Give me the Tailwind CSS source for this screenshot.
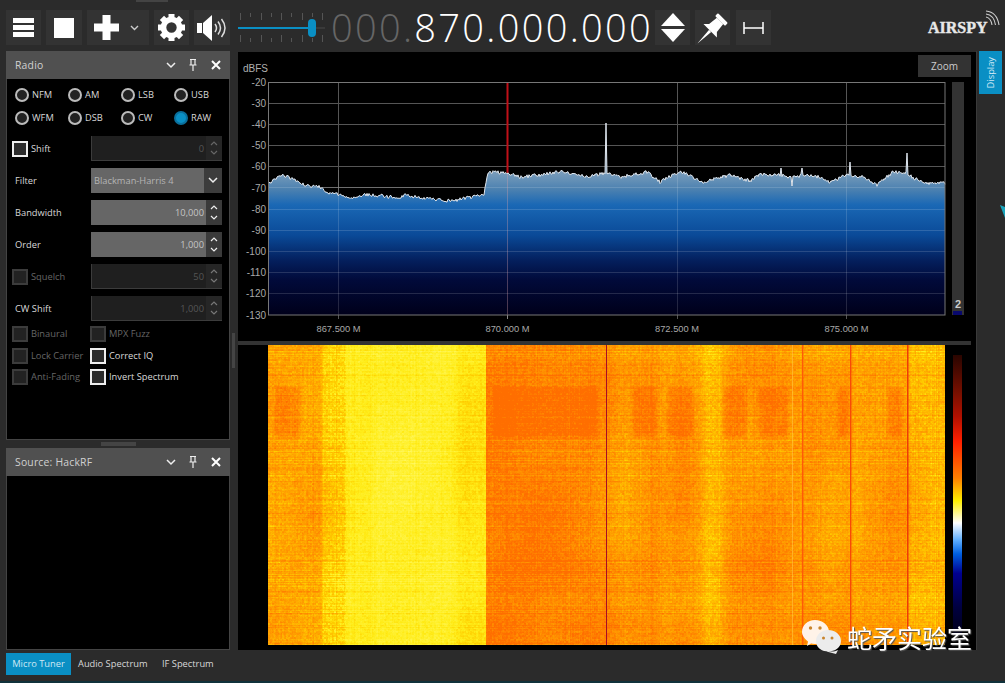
<!DOCTYPE html>
<html lang="en">
<head>
    <meta charset="UTF-8">
    <title>SDR#</title>
    <script src="https://cdn.jsdelivr.net/npm/@tailwindcss/browser@4"></script>
</head>
<body class="bg-[#2b2b2b]">
<div class="relative w-[1005px] h-[683px] overflow-hidden flex flex-col bg-[#2b2b2b] text-[9.3px] text-[#d8d8d8] font-['Open_Sans',sans-serif]">
    <div class="absolute top-0 left-[136px] w-[32px] h-[2px] bg-[#444]"></div>

    <!-- Toolbar -->
    <header class="h-[51px] shrink-0 flex items-start pt-[10px] pl-[6px]">
        <button class="w-[35px] h-[35px] bg-[#333] flex flex-col justify-center items-center gap-[2px]">
            <span class="block w-[21px] h-[5px] bg-white"></span>
            <span class="block w-[21px] h-[5px] bg-white"></span>
            <span class="block w-[21px] h-[5px] bg-white"></span>
        </button>
        <button class="ml-[5px] w-[36px] h-[35px] bg-[#333] flex items-center justify-center">
            <span class="block w-[20px] h-[20px] bg-white"></span>
        </button>
        <button class="ml-[5px] w-[62px] h-[35px] bg-[#333] flex items-center pl-[7px]">
            <svg width="25" height="25" viewBox="0 0 25 25"><path d="M8.5 0h8v8.5H25v8h-8.5V25h-8v-8.5H0v-8h8.5z" fill="#fff"/></svg>
            <svg class="ml-[11px]" width="9" height="6" viewBox="0 0 9 6"><path d="M1 1l3.5 3.5L8 1" fill="none" stroke="#ccc" stroke-width="1.4"/></svg>
        </button>
        <button class="ml-[5px] w-[35px] h-[35px] bg-[#333] flex items-center justify-center">
            <svg width="27" height="27" viewBox="-13.5 -13.5 27 27">
                <circle r="8" fill="none" stroke="#fff" stroke-width="5.6"/>
                <g fill="#fff">
                    <rect x="-3" y="-13.5" width="6" height="6"/>
                    <rect x="-3" y="-13.5" width="6" height="6" transform="rotate(45)"/>
                    <rect x="-3" y="-13.5" width="6" height="6" transform="rotate(90)"/>
                    <rect x="-3" y="-13.5" width="6" height="6" transform="rotate(135)"/>
                    <rect x="-3" y="-13.5" width="6" height="6" transform="rotate(180)"/>
                    <rect x="-3" y="-13.5" width="6" height="6" transform="rotate(225)"/>
                    <rect x="-3" y="-13.5" width="6" height="6" transform="rotate(270)"/>
                    <rect x="-3" y="-13.5" width="6" height="6" transform="rotate(315)"/>
                </g>
            </svg>
        </button>
        <button class="ml-[5px] w-[36px] h-[35px] bg-[#333] flex items-center justify-center">
            <svg width="30" height="28" viewBox="0 0 30 28">
                <path d="M0 9h5v10H0zM6 9L15 1v26l-9-8z" fill="#fff"/>
                <path d="M18 10q3 4 0 8M21 7.5q5 6.500 0 13M24.500 5q7 9 0 18" fill="none" stroke="#ddd" stroke-width="1.5"/>
            </svg>
        </button>
        <!-- Gain slider -->
        <div class="ml-[8px] w-[87px] h-[35px] flex flex-col justify-between py-[3px]">
            <div class="flex justify-between px-[2px] h-[7px] items-start">
                <i class="w-px h-[7px] bg-[#555]"></i><i class="w-px h-[4px] bg-[#555]"></i><i class="w-px h-[7px] bg-[#555]"></i><i class="w-px h-[4px] bg-[#555]"></i><i class="w-px h-[7px] bg-[#555]"></i><i class="w-px h-[4px] bg-[#555]"></i><i class="w-px h-[7px] bg-[#555]"></i><i class="w-px h-[4px] bg-[#555]"></i><i class="w-px h-[7px] bg-[#555]"></i>
            </div>
            <div class="relative h-[2px] bg-[#3a3a3a]">
                <div class="h-full w-[74px] bg-[#0a8fc4]"></div>
                <div class="absolute left-[70px] top-[-8px] w-[8px] h-[18px] rounded-[4px] bg-[#0a8fc4]"></div>
            </div>
            <div class="flex justify-between px-[2px] h-[7px] items-end">
                <i class="w-px h-[7px] bg-[#555]"></i><i class="w-px h-[4px] bg-[#555]"></i><i class="w-px h-[7px] bg-[#555]"></i><i class="w-px h-[4px] bg-[#555]"></i><i class="w-px h-[7px] bg-[#555]"></i><i class="w-px h-[4px] bg-[#555]"></i><i class="w-px h-[7px] bg-[#555]"></i><i class="w-px h-[4px] bg-[#555]"></i><i class="w-px h-[7px] bg-[#555]"></i>
            </div>
        </div>
        <!-- Frequency -->
        <div class="ml-[6px] w-[324px] h-[35px] leading-[35px] text-[38px] font-light tracking-[2.3px] whitespace-nowrap text-white"><span class="text-[#666]">000.</span>870.000.000</div>
        <button class="w-[35px] h-[35px] bg-[#333] flex flex-col items-center justify-center gap-[3px]">
            <svg width="24" height="13" viewBox="0 0 24 13"><path d="M12 0l12 13H0z" fill="#fff"/></svg>
            <svg width="24" height="13" viewBox="0 0 24 13"><path d="M12 13L24 0H0z" fill="#fff"/></svg>
        </button>
        <button class="ml-[5px] w-[35px] h-[35px] bg-[#333] flex items-center justify-center">
            <svg width="35" height="35" viewBox="-17.500 -17.500 35 35">
                <g transform="translate(.5,.5) rotate(45)" fill="#fff">
                    <rect x="-7" y="-14" width="14" height="4" rx="1"/>
                    <path d="M-4.500-10h9L5.500 0 9.500 4h-19L-5.500 0z"/>
                    <path d="M-1.500 4h3L0 22z"/>
                </g>
            </svg>
        </button>
        <button class="ml-[6px] w-[35px] h-[35px] bg-[#333] flex items-center justify-center">
            <svg width="21" height="14" viewBox="0 0 21 14"><path d="M1 1v12M20 1v12M1 7h19" fill="none" stroke="#fff" stroke-width="1.500"/></svg>
        </button>
        <div class="relative ml-[157px] w-[72px] h-[30px]">
            <span class="absolute left-0 top-[9px] leading-[18px] text-[16px] font-bold text-[#e8e8e8] [-webkit-text-stroke:0.4px_#e8e8e8] font-['Liberation_Serif',serif]">AIRSPY</span>
            <svg class="absolute left-[56px] top-0" width="17" height="16" viewBox="0 0 17 16">
                <path d="M2 7q5 1 6 8M2 4q8 1 9.500 11M2 1q11 1 13 14" fill="none" stroke="#ccc" stroke-width="1.100"/>
            </svg>
        </div>
    </header>

    <!-- Workspace -->
    <div class="h-[599px] shrink-0 flex pl-[6px]">
        <!-- Left panels -->
        <aside class="w-[224px] shrink-0 flex flex-col">
            <div class="h-[28px] shrink-0 bg-[#505050] flex items-center pl-[9px]">
                <span class="w-[151px] mt-[2px] text-[10.4px] tracking-[0.2px] text-[#d0d0d0]">Radio</span>
                <svg width="10" height="7" viewBox="0 0 10 7"><path d="M1 1l4 4 4-4" fill="none" stroke="#eee" stroke-width="1.500"/></svg>
                <svg class="ml-[13px]" width="8" height="12" viewBox="0 0 8 12"><path d="M1 .5h6M2 1v4.500M6 1v4.500M.5 6h7M4 6v6" fill="none" stroke="#eee" stroke-width="1.200"/></svg>
                <svg class="ml-[14px]" width="10" height="10" viewBox="0 0 10 10"><path d="M1 1l8 8M9 1l-8 8" fill="none" stroke="#fff" stroke-width="2"/></svg>
            </div>
            <div class="h-[361px] shrink-0 bg-black border border-t-0 border-[#444]">
                <div class="grid grid-cols-[repeat(4,53px)] gap-y-[9px] pl-[8px] pt-[9px] leading-[14px]">
                    <label class="flex items-center gap-[3px]"><span class="w-[14px] h-[14px] rounded-full border-2 border-[#bbb] bg-[#222]"></span>NFM</label>
                    <label class="flex items-center gap-[3px]"><span class="w-[14px] h-[14px] rounded-full border-2 border-[#bbb] bg-[#222]"></span>AM</label>
                    <label class="flex items-center gap-[3px]"><span class="w-[14px] h-[14px] rounded-full border-2 border-[#bbb] bg-[#222]"></span>LSB</label>
                    <label class="flex items-center gap-[3px]"><span class="w-[14px] h-[14px] rounded-full border-2 border-[#bbb] bg-[#222]"></span>USB</label>
                    <label class="flex items-center gap-[3px]"><span class="w-[14px] h-[14px] rounded-full border-2 border-[#bbb] bg-[#222]"></span>WFM</label>
                    <label class="flex items-center gap-[3px]"><span class="w-[14px] h-[14px] rounded-full border-2 border-[#bbb] bg-[#222]"></span>DSB</label>
                    <label class="flex items-center gap-[3px]"><span class="w-[14px] h-[14px] rounded-full border-2 border-[#bbb] bg-[#222]"></span>CW</label>
                    <label class="flex items-center gap-[3px]"><span class="w-[14px] h-[14px] rounded-full border-2 border-[#0a6f9c] bg-[#0a8fc4]"></span>RAW</label>
                </div>

                <div class="flex flex-col gap-[7px] mt-[11px] pr-[7px]">
                    <div class="h-[25px] flex items-center">
                        <span class="ml-[5px] w-[16px] h-[16px] border-2 border-[#eee] bg-[#2c2c2c]"></span>
                        <span class="ml-[3px] w-[60px]">Shift</span>
                        <div class="flex-1 h-full flex bg-[#1f1f1f] border-l border-b border-[#3c3c3c]">
                            <span class="flex-1 text-right pr-[2px] leading-[25px] text-[#555]">0</span>
                            <span class="w-[16px] bg-[#262626] flex flex-col items-center justify-around py-[3px]">
                                <svg width="8" height="5" viewBox="0 0 8 5"><path d="M1 4l3-3 3 3" fill="none" stroke="#666" stroke-width="1.200"/></svg>
                                <svg width="8" height="5" viewBox="0 0 8 5"><path d="M1 1l3 3 3-3" fill="none" stroke="#666" stroke-width="1.200"/></svg>
                            </span>
                        </div>
                    </div>
                    <div class="h-[25px] flex items-center">
                        <span class="ml-[8px] w-[76px]">Filter</span>
                        <div class="flex-1 h-full flex bg-[#666]">
                            <span class="flex-1 pl-[3px] leading-[25px] text-[#b4b4b4]">Blackman-Harris 4</span>
                            <span class="w-[18px] bg-[#3c3c3c] flex items-center justify-center">
                                <svg width="10" height="7" viewBox="0 0 10 7"><path d="M1 1l4 4 4-4" fill="none" stroke="#eee" stroke-width="1.500"/></svg>
                            </span>
                        </div>
                    </div>
                    <div class="h-[25px] flex items-center">
                        <span class="ml-[8px] w-[76px]">Bandwidth</span>
                        <div class="flex-1 h-full flex bg-[#666]">
                            <span class="flex-1 text-right pr-[2px] leading-[25px] text-[#c4c4c4]">10,000</span>
                            <span class="w-[16px] bg-[#3a3a3a] flex flex-col items-center justify-around py-[3px]">
                                <svg width="8" height="5" viewBox="0 0 8 5"><path d="M1 4l3-3 3 3" fill="none" stroke="#eee" stroke-width="1.200"/></svg>
                                <svg width="8" height="5" viewBox="0 0 8 5"><path d="M1 1l3 3 3-3" fill="none" stroke="#eee" stroke-width="1.200"/></svg>
                            </span>
                        </div>
                    </div>
                    <div class="h-[25px] flex items-center">
                        <span class="ml-[8px] w-[76px]">Order</span>
                        <div class="flex-1 h-full flex bg-[#666]">
                            <span class="flex-1 text-right pr-[2px] leading-[25px] text-[#c4c4c4]">1,000</span>
                            <span class="w-[16px] bg-[#3a3a3a] flex flex-col items-center justify-around py-[3px]">
                                <svg width="8" height="5" viewBox="0 0 8 5"><path d="M1 4l3-3 3 3" fill="none" stroke="#eee" stroke-width="1.200"/></svg>
                                <svg width="8" height="5" viewBox="0 0 8 5"><path d="M1 1l3 3 3-3" fill="none" stroke="#eee" stroke-width="1.200"/></svg>
                            </span>
                        </div>
                    </div>
                    <div class="h-[25px] flex items-center">
                        <span class="ml-[5px] w-[16px] h-[16px] border-2 border-[#3c3c3c] bg-[#222]"></span>
                        <span class="ml-[3px] w-[60px] text-[#666]">Squelch</span>
                        <div class="flex-1 h-full flex bg-[#1f1f1f] border-l border-b border-[#3c3c3c]">
                            <span class="flex-1 text-right pr-[2px] leading-[25px] text-[#555]">50</span>
                            <span class="w-[16px] bg-[#262626] flex flex-col items-center justify-around py-[3px]">
                                <svg width="8" height="5" viewBox="0 0 8 5"><path d="M1 4l3-3 3 3" fill="none" stroke="#777" stroke-width="1.200"/></svg>
                                <svg width="8" height="5" viewBox="0 0 8 5"><path d="M1 1l3 3 3-3" fill="none" stroke="#777" stroke-width="1.200"/></svg>
                            </span>
                        </div>
                    </div>
                    <div class="h-[25px] flex items-center">
                        <span class="ml-[8px] w-[76px]">CW Shift</span>
                        <div class="flex-1 h-full flex bg-[#1f1f1f] border-l border-b border-[#3c3c3c]">
                            <span class="flex-1 text-right pr-[2px] leading-[25px] text-[#555]">1,000</span>
                            <span class="w-[16px] bg-[#262626] flex flex-col items-center justify-around py-[3px]">
                                <svg width="8" height="5" viewBox="0 0 8 5"><path d="M1 4l3-3 3 3" fill="none" stroke="#777" stroke-width="1.200"/></svg>
                                <svg width="8" height="5" viewBox="0 0 8 5"><path d="M1 1l3 3 3-3" fill="none" stroke="#777" stroke-width="1.200"/></svg>
                            </span>
                        </div>
                    </div>
                </div>

                <div class="grid grid-cols-[78px_1fr] gap-y-[5.5px] mt-[5px] pl-[5px]">
                    <label class="flex items-center gap-[3px] text-[#666]"><span class="w-[16px] h-[16px] border-2 border-[#3c3c3c] bg-[#222]"></span>Binaural</label>
                    <label class="flex items-center gap-[3px] text-[#666]"><span class="w-[16px] h-[16px] border-2 border-[#3c3c3c] bg-[#222]"></span>MPX Fuzz</label>
                    <label class="flex items-center gap-[3px] text-[#666]"><span class="w-[16px] h-[16px] border-2 border-[#3c3c3c] bg-[#222]"></span>Lock Carrier</label>
                    <label class="flex items-center gap-[3px]"><span class="w-[16px] h-[16px] border-2 border-[#eee] bg-[#2c2c2c]"></span>Correct IQ</label>
                    <label class="flex items-center gap-[3px] text-[#666]"><span class="w-[16px] h-[16px] border-2 border-[#3c3c3c] bg-[#222]"></span>Anti-Fading</label>
                    <label class="flex items-center gap-[3px]"><span class="w-[16px] h-[16px] border-2 border-[#eee] bg-[#2c2c2c]"></span>Invert Spectrum</label>
                </div>
            </div>
            <div class="h-[8px] shrink-0 flex items-center justify-center">
                <span class="block w-[35px] h-[4px] bg-[#444]"></span>
            </div>
            <div class="h-[28px] shrink-0 bg-[#505050] flex items-center pl-[9px]">
                <span class="w-[151px] mt-[2px] text-[10.4px] tracking-[0.2px] text-[#d0d0d0]">Source: HackRF</span>
                <svg width="10" height="7" viewBox="0 0 10 7"><path d="M1 1l4 4 4-4" fill="none" stroke="#eee" stroke-width="1.500"/></svg>
                <svg class="ml-[13px]" width="8" height="12" viewBox="0 0 8 12"><path d="M1 .5h6M2 1v4.500M6 1v4.500M.5 6h7M4 6v6" fill="none" stroke="#eee" stroke-width="1.200"/></svg>
                <svg class="ml-[14px]" width="10" height="10" viewBox="0 0 10 10"><path d="M1 1l8 8M9 1l-8 8" fill="none" stroke="#fff" stroke-width="2"/></svg>
            </div>
            <div class="flex-1 bg-black border border-t-0 border-[#444]"></div>
        </aside>

        <div class="w-[8px] shrink-0 pt-[282px]">
            <span class="block ml-[2px] w-[3px] h-[35px] bg-[#444]"></span>
        </div>

        <!-- Spectrum + waterfall -->
        <main class="relative w-[738px] shrink-0 bg-black mt-px h-[598px] flex flex-col">
            <button class="absolute left-[680px] top-[3px] w-[53px] h-[22px] bg-[#333] text-[10px] text-[#ccc]">Zoom</button>
            <svg class="block shrink-0" width="738" height="289" viewBox="238 52 738 289">
                <defs>
                    <linearGradient id="fft" gradientUnits="userSpaceOnUse" x1="0" y1="153" x2="0" y2="315">
                        <stop offset="0" stop-color="#8aa6c0"/>
                        <stop offset="0.117" stop-color="#7a9dbb"/>
                        <stop offset="0.228" stop-color="#4a80b0"/>
                        <stop offset="0.32" stop-color="#1a68b5"/>
                        <stop offset="0.506" stop-color="#0a4a98"/>
                        <stop offset="0.66" stop-color="#04205e"/>
                        <stop offset="0.784" stop-color="#010a3a"/>
                        <stop offset="1" stop-color="#00001a"/>
                    </linearGradient>
                </defs>
                <!-- grid is drawn twice: plain on black, faint over the fill -->
                <path id="grid1" d="M268 103.500H945M268 124.500H945M268 145.500H945M268 166.500H945M268 187.500H945M268 209.500H945M268 230.500H945M268 251.500H945M268 272.500H945M268 293.500H945M338.500 82V319M677.500 82V319M846.500 82V319" stroke="#555" stroke-width="1"/>
                <path id="fill" fill="url(#fft)"/>
                <path d="M268 187.500H945M268 209.500H945M268 230.500H945M268 251.500H945M268 272.500H945M268 293.500H945M338.500 170V315M677.500 170V315M846.500 170V315" stroke="#fff" stroke-opacity="0.14" stroke-width="1"/>
                <path d="M507.500 82V173" stroke="#c01018" stroke-width="2"/>
                <path d="M507.500 173V315" stroke="#d8a0a8" stroke-opacity="0.35" stroke-width="1"/>
                <path d="M507.500 315V319" stroke="#888" stroke-width="1"/>
                <path id="trace" fill="none" stroke="#dfe6ee" stroke-width="1"/>
                <rect x="268.500" y="82.500" width="676.500" height="232.500" fill="none" stroke="#777" stroke-width="1"/>
                <g font-family="Liberation Sans, sans-serif" font-size="10" fill="#a8a8a8" text-anchor="end">
                    <text x="266" y="86">-20</text>
                    <text x="266" y="107">-30</text>
                    <text x="266" y="128">-40</text>
                    <text x="266" y="149">-50</text>
                    <text x="266" y="170">-60</text>
                    <text x="266" y="192">-70</text>
                    <text x="266" y="213">-80</text>
                    <text x="266" y="234">-90</text>
                    <text x="266" y="255">-100</text>
                    <text x="266" y="276">-110</text>
                    <text x="266" y="297">-120</text>
                    <text x="266" y="319">-130</text>
                </g>
                <text x="243" y="72" font-family="Liberation Sans, sans-serif" font-size="10" fill="#b0b0b0">dBFS</text>
                <g font-family="Liberation Sans, sans-serif" font-size="9.300" fill="#a8a8a8" text-anchor="middle">
                    <text x="338.500" y="332">867.500 M</text>
                    <text x="507.500" y="332">870.000 M</text>
                    <text x="677" y="332">872.500 M</text>
                    <text x="846.500" y="332">875.000 M</text>
                </g>
                <rect x="952" y="82" width="12" height="233" fill="#333"/>
                <rect x="953" y="311" width="9" height="4" fill="#08086c"/>
                <text x="958" y="308" font-family="Liberation Sans, sans-serif" font-size="11" font-weight="bold" fill="#ccc" text-anchor="middle">2</text>
            </svg>
            <div class="h-[4px] w-[733px] shrink-0 bg-[#333]"></div>
            <div class="flex pl-[30px]">
                <canvas id="wf" class="block" width="677" height="300"></canvas>
                <div class="ml-[8px] mt-[10px] w-[9px] h-[280px] bg-[linear-gradient(to_bottom,#2a0500_0%,#7a1000_14%,#b01000_22%,#ff2000_31%,#ff8000_44%,#ffee00_52%,#ffffff_60%,#60b0ff_66%,#0060e0_71%,#000090_78%,#000040_90%,#000018_100%)]"></div>
            </div>
        </main>

        <!-- Right strip -->
        <div class="w-[29px] shrink-0 border-l border-[#3a3a3a] pl-[2px]">
            <div class="w-[23px] h-[43px] bg-[#0a8fc4] flex items-center justify-center">
                <span class="[writing-mode:vertical-rl] rotate-180 text-[#cfe8f4]">Display</span>
            </div>
        </div>
    </div>

    <!-- Bottom tabs -->
    <nav class="flex pl-[6px] pt-[3px] items-start h-[33px] border-b-2 border-[#10323c]">
        <span class="w-[65px] h-[22px] leading-[22px] text-center bg-[#0a8fc4] text-[#cfe8f4]">Micro Tuner</span>
        <span class="ml-[7px] w-[84px] h-[22px] leading-[22px]">Audio Spectrum</span>
        <span class="h-[22px] leading-[22px]">IF Spectrum</span>
    </nav>

    <!-- Overlays: stray teal mark and the watermark -->
    <svg class="absolute left-[1000px] top-[205px]" width="5" height="13" viewBox="0 0 5 13"><path d="M0 0l5 2v11z" fill="#1aa4bc"/></svg>
    <div class="absolute left-[802px] top-[619px] flex items-start">
        <svg width="40" height="36" viewBox="0 0 40 36">
            <path d="M13 1C20.500 1 27 6 27 13c0 7-6.500 12-14 12-1.500 0-3-.2-4-.5L5 27l1-4.500C3 20 0 17 0 13 0 6 5.500 1 13 1z" fill="#fff3e8"/>
            <circle cx="8.500" cy="9" r="1.700" fill="#c8842c"/>
            <circle cx="18" cy="9" r="1.700" fill="#c8842c"/>
            <path d="M26 11c7 0 13 4.500 13 11s-6 10.500-13 10.500c-1 0-2.500-.1-3.500-.4L34 35l2-4c-3 2-6 1.500-10 1.500-7 0-12-4.500-12-10.500S19 11 26 11z" fill="#ececec"/>
            <circle cx="21.500" cy="19" r="1.500" fill="#c8842c"/>
            <circle cx="30" cy="19" r="1.500" fill="#c8842c"/>
        </svg>
        <span class="ml-[5px] mt-[3px] leading-[30px] text-[25px] text-white whitespace-nowrap [text-shadow:1px_1px_1px_#555] font-['Noto_Sans_CJK_SC','Noto_Sans',sans-serif]">蛇矛实验室</span>
    </div>
</div>

<script>
    // seeded so the noise is the same on every load
    let seed = 20240;
    function rnd() {
        seed = (seed * 1664525 + 1013904223) % 4294967296;
        return seed / 4294967296;
    }
    function soft(v, a, b, edge) {
        return Math.max(0, Math.min(1, (v - a) / edge, (b - v) / edge));
    }

    // spectrum trace: page x, y
    const knots = [[268,185],[274,179],[283,175],[300,182],[305,186],[320,187],[327,193],[340,194],[348,198],[367,195],[383,196],[397,198],[405,195],[423,198],[450,201],[473,197],[484,194],[488,172],[507,173],[520,177],[540,175],[562,171],[587,177],[605,173],[620,177],[647,172],[660,182],[680,171],[703,182],[730,175],[750,181],[760,174],[780,175],[792,178],[802,175],[820,177],[830,182],[847,175],[863,177],[877,185],[893,172],[907,173],[913,178],[927,183],[945,183]];
    const spikes = { 606: 123, 781: 168, 792: 186, 802: 168, 850: 162, 907: 153 };
    let pts = [], k = 0;
    for (let x = 268; x <= 945; x += 1) {
        while (knots[k + 1][0] < x) k++;
        const a = knots[k], b = knots[k + 1];
        let y = a[1] + (b[1] - a[1]) * (x - a[0]) / (b[0] - a[0]) + (rnd() - 0.5) * 3.4;
        if (spikes[x]) y = spikes[x];
        pts.push(x + ' ' + y.toFixed(1));
    }
    document.getElementById('trace').setAttribute('d', 'M' + pts.join('L'));
    document.getElementById('fill').setAttribute('d', 'M268 315L' + pts.join('L') + 'L945 315Z');

    // waterfall: brightness by column, then row and pixel noise
    const cols = [[268,.46],[300,.48],[321,.46],[323,.76],[344,.8],[346,1],[365,1.02],[380,1.08],[440,1.08],[456,1.02],[458,.94],[485,.94],[486,.14],[530,.16],[590,.24],[606,.3],[625,.46],[640,.36],[655,.3],[664,.42],[680,.3],[698,.42],[708,.68],[716,.66],[730,.36],[752,.34],[770,.3],[790,.38],[815,.36],[832,.46],[845,.4],[858,.5],[885,.36],[905,.38],[912,.6],[945,.64]];
    const patches = [[272,302],[490,600],[630,658],[665,695],[720,748],[755,790],[835,850],[885,905]];
    const wf = document.getElementById('wf'), ctx = wf.getContext('2d');
    const img = ctx.createImageData(677, 300);
    let rows = [], colNoise = [], grain = [], c = 0;
    for (let y = 0; y < 300; y++) rows.push((rnd() - 0.5) * (rnd() < 0.3 ? 0.4 : 0.14));
    for (let x = 0; x < 677; x++) colNoise.push((rnd() - 0.5) * (rnd() < 0.25 ? 0.2 : 0.07));
    for (let i = 0; i < 340 * 151; i++) grain.push((rnd() - 0.5) * 0.26);
    const ramp = [[0,255,110,0],[.5,255,166,0],[.8,255,206,0],[1,255,236,24],[1.4,255,250,110]];
    function colour(v) {
        v = Math.max(0, Math.min(1.4, v));
        let i = 0;
        while (ramp[i + 1][0] < v) i++;
        const a = ramp[i], b = ramp[i + 1], t = (v - a[0]) / (b[0] - a[0]);
        return [255, a[2] + (b[2] - a[2]) * t, a[3] + (b[3] - a[3]) * t];
    }
    for (let px = 0; px < 677; px++) {
        const x = px + 268;
        while (cols[c + 1][0] < x) c++;
        const a = cols[c], b = cols[c + 1];
        const base = a[1] + (b[1] - a[1]) * (x - a[0]) / (b[0] - a[0]);
        let patch = 0;
        patches.forEach(p => { patch = Math.max(patch, soft(x, p[0], p[1], 5)); });
        // the bright band takes much less of the row/pixel noise
        const amount = base > 0.9 ? 0.55 : 1;
        for (let py = 0; py < 300; py++) {
            const y = py + 345;
            const coarse = grain[(py >> 1) * 340 + (px >> 1)];
            let v = base + (rows[py] + colNoise[px] + coarse + (rnd() - 0.5) * 0.14) * amount;
            v -= 0.24 * patch * soft(y, 384, 440, 5) * amount;
            v += 0.09 * Math.sin(y / 37 + x / 90) * Math.sin(x / 23) * amount;
            if (x > 486 && y > 555 && y < 590) v -= 0.08;
            if (x > 486 && y > 620) v -= 0.05;
            if (x > 486 && y < 360) v += 0.06;
            const rgb = colour(v), o = (py * 677 + px) * 4;
            img.data[o] = rgb[0]; img.data[o + 1] = rgb[1]; img.data[o + 2] = rgb[2]; img.data[o + 3] = 255;
        }
    }
    ctx.putImageData(img, 0, 0);
    // carriers that run the full height
    [[606,'#a80c28',0],[802,'#ff5a08',.4],[850,'#f84a08',.4],[907,'#ee3c08',.5],[792,'#ffc850',0]].forEach(l => {
        ctx.globalAlpha = l[0] === 792 ? 0.5 : 1;
        ctx.fillStyle = l[1];
        ctx.fillRect(l[0] - 268, 0, 1, 300);
        if (l[2]) {
            ctx.globalAlpha = l[2];
            ctx.fillRect(l[0] - 267, 0, 1, 300);
        }
    });
</script>
</body>
</html>
